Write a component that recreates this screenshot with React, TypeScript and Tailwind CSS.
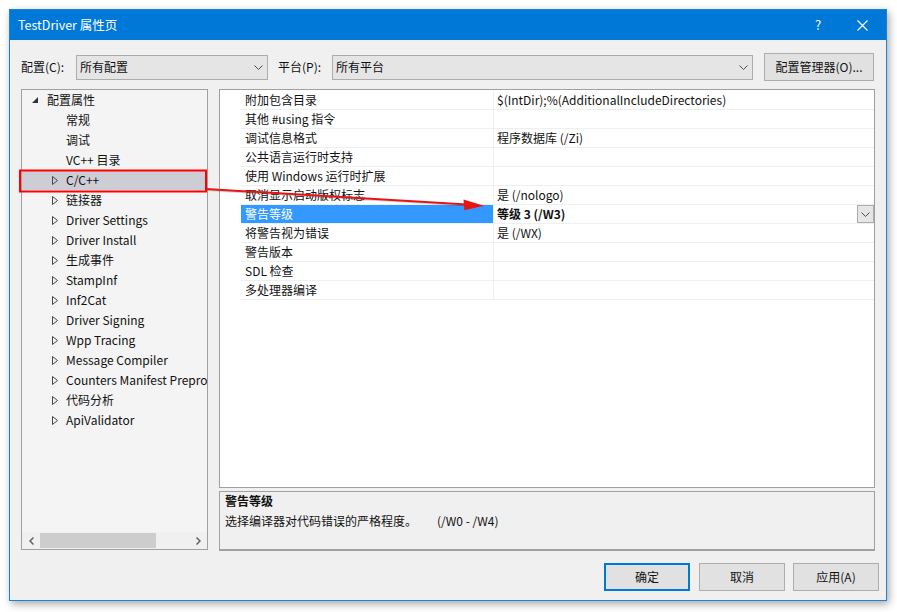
import React from "react";

const treeItems = [
  { label: "常规", leaf: true },
  { label: "调试", leaf: true },
  { label: "VC++ 目录", leaf: true },
  { label: "C/C++", selected: true },
  { label: "链接器" },
  { label: "Driver Settings" },
  { label: "Driver Install" },
  { label: "生成事件" },
  { label: "StampInf" },
  { label: "Inf2Cat" },
  { label: "Driver Signing" },
  { label: "Wpp Tracing" },
  { label: "Message Compiler" },
  { label: "Counters Manifest Preprocessor" },
  { label: "代码分析" },
  { label: "ApiValidator" },
];

const props = [
  { name: "附加包含目录", value: "$(IntDir);%(AdditionalIncludeDirectories)" },
  { name: "其他 #using 指令", value: "" },
  { name: "调试信息格式", value: "程序数据库 (/Zi)" },
  { name: "公共语言运行时支持", value: "" },
  { name: "使用 Windows 运行时扩展", value: "" },
  { name: "取消显示启动版权标志", value: "是 (/nologo)" },
  { name: "警告等级", value: "等级 3 (/W3)", selected: true },
  { name: "将警告视为错误", value: "是 (/WX)" },
  { name: "警告版本", value: "" },
  { name: "SDL 检查", value: "" },
  { name: "多处理器编译", value: "" },
];

function Chevron({ className = "" }: { className?: string }) {
  return (
    <svg width="9" height="5" viewBox="0 0 9 5" className={className}>
      <path d="M0.5 0.5 L4.5 4.5 L8.5 0.5" fill="none" stroke="#4d4d4d" strokeWidth="1" />
    </svg>
  );
}

function Combo({ text, width }: { text: string; width: string }) {
  return (
    <div className={`${width} h-[25px] flex items-center justify-between bg-[#e5e5e5] border border-[#acacac] pl-[3px] pr-[4px]`}>
      <span>{text}</span>
      <Chevron />
    </div>
  );
}

function Btn({ children, primary = false, w = "w-[86px]" }: { children: React.ReactNode; primary?: boolean; w?: string }) {
  return (
    <div
      className={`${w} h-[28px] flex items-center justify-center bg-[#e1e1e1] ${
        primary ? "border-2 border-[#0078d7]" : "border border-[#adadad]"
      }`}
    >
      {children}
    </div>
  );
}

export default function App() {
  return (
    <div className="relative w-[897px] h-[612px] bg-white overflow-hidden text-[12px] text-[#111] font-['Noto_Sans_CJK_SC',sans-serif]">
      <div className="absolute left-[9px] top-[9px] w-[878px] h-[592px] border border-[#1883d7] bg-[#f0f0f0] flex flex-col shadow-[2px_3px_8px_rgba(0,0,0,0.35)]">
        {/* title bar */}
        <div className="h-[30px] bg-[#0078d7] flex items-center text-white pl-[8px] shrink-0">
          <span className="flex-1 text-[12.5px]">TestDriver 属性页</span>
          <span className="w-[14px] text-[13px] mr-[32px] text-center">?</span>
          <svg width="11" height="11" viewBox="0 0 11 11" className="mr-[18px]">
            <path d="M0.5 0.5 L10.5 10.5 M10.5 0.5 L0.5 10.5" stroke="white" strokeWidth="1.1" />
          </svg>
        </div>

        {/* config row */}
        <div className="flex items-center h-[28px] mt-[13px] pl-[11px]">
          <span className="w-[55px]">配置(C):</span>
          <Combo text="所有配置" width="w-[192px]" />
          <span className="w-[54px] ml-[10px]">平台(P):</span>
          <Combo text="所有平台" width="w-[421px]" />
          <div className="ml-[11px]">
            <Btn w="w-[110px]">配置管理器(O)...</Btn>
          </div>
        </div>

        {/* main */}
        <div className="flex mt-[8px] pl-[11px]">
          {/* tree */}
          <div className="w-[187px] h-[461px] border border-[#a0a0a0] bg-[#f4f4f4] flex flex-col">
            <div className="flex-1 overflow-hidden pt-[0px]">
              <div className="flex items-center h-[20px] whitespace-nowrap">
                <span className="w-[10px]" />
                <span className="w-[15px] flex items-center">
                  <svg width="6" height="6" viewBox="0 0 6 6">
                    <path d="M6 0 L6 6 L0 6 Z" fill="#333" />
                  </svg>
                </span>
                <span>配置属性</span>
              </div>
              {treeItems.map((t) => (
                <div
                  key={t.label}
                  className={`flex items-center h-[20px] whitespace-nowrap ${t.selected ? "bg-[#cdcdd6]" : ""}`}
                >
                  <span className="w-[30px] shrink-0" />
                  <span className="w-[14px] shrink-0 flex items-center">
                    {!t.leaf && (
                      <svg width="6" height="9" viewBox="0 0 6 9">
                        <path d="M0.5 0.5 L5.5 4.5 L0.5 8.5 Z" fill="none" stroke="#444" strokeWidth="1" />
                      </svg>
                    )}
                  </span>
                  <span>{t.label}</span>
                </div>
              ))}
            </div>
            <div className="h-[17px] flex items-center bg-[#f0f0f0] shrink-0">
              <span className="w-[18px] flex justify-center">
                <svg width="5" height="8" viewBox="0 0 5 8">
                  <path d="M4.5 0.5 L1 4 L4.5 7.5" fill="none" stroke="#606060" strokeWidth="1.5" />
                </svg>
              </span>
              <div className="w-[116px] h-[15px] bg-[#cdcdcd]" />
              <div className="flex-1" />
              <span className="w-[18px] flex justify-center">
                <svg width="5" height="8" viewBox="0 0 5 8">
                  <path d="M0.5 0.5 L4 4 L0.5 7.5" fill="none" stroke="#606060" strokeWidth="1.5" />
                </svg>
              </span>
            </div>
          </div>

          {/* right column */}
          <div className="ml-[11px] w-[656px] flex flex-col">
            <div className="h-[399px] border border-[#a0a0a0] bg-white pt-[1px]">
              {props.map((p) => (
                <div key={p.name} className="flex h-[19px]">
                  <div className="w-[21px] shrink-0" />
                  <div className="flex flex-1 border-b border-[#eceff3]">
                    <div
                      className={`w-[252px] shrink-0 pl-[4px] leading-[18px] ${
                        p.selected ? "bg-[#3399ff] text-white" : ""
                      }`}
                    >
                      {p.name}
                    </div>
                    <div className="flex-1 flex items-center border-l border-[#eceff3] pl-[3px] leading-[18px]">
                      <span className={`flex-1 ${p.selected ? "font-bold" : ""}`}>{p.value}</span>
                      {p.selected && (
                        <div className="w-[17px] h-[18px] bg-[#e5e5e5] border border-[#acacac] flex items-center justify-center">
                          <Chevron />
                        </div>
                      )}
                    </div>
                  </div>
                </div>
              ))}
            </div>
            <div className="mt-[3px] h-[60px] border border-[#a0a0a0] border-b-2 bg-[#f0f0f0] pl-[5px]">
              <div className="font-bold leading-[18px]">警告等级</div>
              <div className="mt-[2px] leading-[18px] flex">
                <span className="w-[212px]">选择编译器对代码错误的严格程度。</span>
                <span>(/W0 - /W4)</span>
              </div>
            </div>
          </div>
        </div>

        {/* buttons */}
        <div className="flex justify-end mt-[12px] pr-[7px]">
          <Btn primary>确定</Btn>
          <div className="ml-[9px]">
            <Btn>取消</Btn>
          </div>
          <div className="ml-[8px]">
            <Btn>应用(A)</Btn>
          </div>
        </div>
      </div>

      {/* annotation overlay */}
      <svg className="absolute left-0 top-0 pointer-events-none" width="897" height="612" viewBox="0 0 897 612">
        <rect x="20" y="170.5" width="186" height="21" fill="none" stroke="#ff0000" strokeWidth="2" />
        <line x1="207" y1="190" x2="468" y2="205.5" stroke="rgba(0,0,0,0.18)" strokeWidth="2" />
        <line x1="206" y1="189" x2="467" y2="204.6" stroke="#e81414" strokeWidth="2" />
        <polygon points="484,205.8 463.5,199.5 464.3,210.3" fill="#e81414" />
      </svg>
    </div>
  );
}
